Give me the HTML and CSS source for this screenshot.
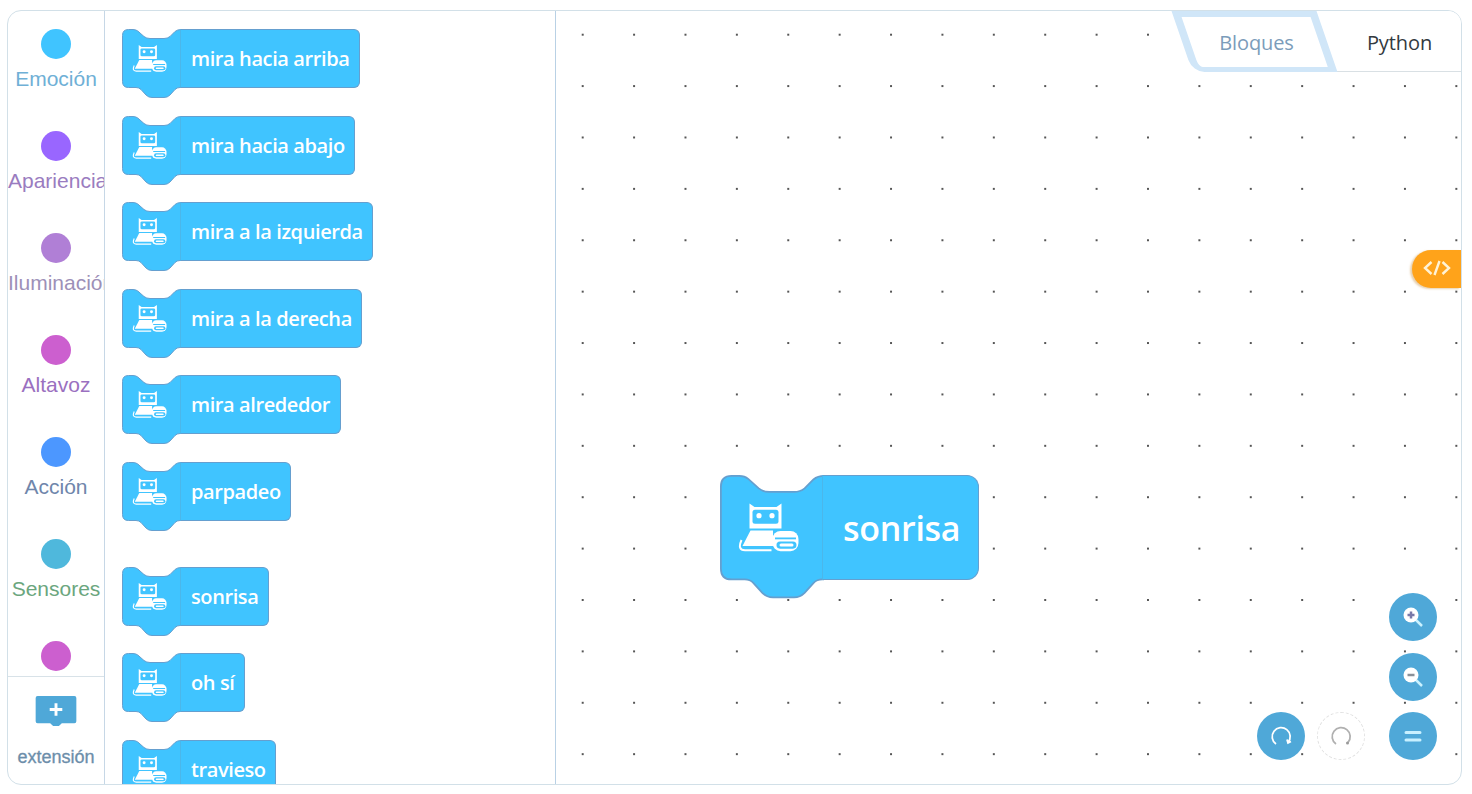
FILE: index.html
```html
<!DOCTYPE html>
<html lang="es">
<head>
  <meta charset="UTF-8" />
  <title>Bloques</title>
  <link rel="stylesheet" href="styles.css">
</head>
<body>

<svg class="defs" width="0" height="0">
  <symbol id="hat" viewBox="0 0 59 70" preserveAspectRatio="none">
    <path class="hat-shape" d="M.5 6.5Q.5.5 6.500.5H11Q14 .5 16 2.200L22 7.500Q24.500 9.500 28 9.500H42Q45.500 9.500 48 7.500L53 2.500Q55.500.5 59 .5V58.500H58Q55 58.500 53 60.500L48 66Q45.500 68.500 42 68.500H30Q26.500 68.500 24 66L19 60.500Q17 58.500 14 58.500H6.500Q.5 58.500.5 52.500Z"/>
    <g transform="translate(10.500 16) scale(.567)">
      <path class="robot-white" d="M11 0L16 3.500H38L43 0V24.500H11Z"/>
      <rect class="robot-blue" x="14" y="6" width="26" height="14" rx="2.500"/>
      <circle class="robot-white" cx="20.500" cy="12" r="2.600"/>
      <circle class="robot-white" cx="33.500" cy="12" r="2.600"/>
      <path class="robot-white" d="M12 26.500H34.500V42H4Z"/>
      <path class="robot-line" d="M3 36Q-1.500 46 6.500 46H33"/>
      <rect class="robot-white" x="34" y="27" width="26" height="20" rx="8"/>
      <rect class="robot-blue" x="36.500" y="33.500" width="21" height="1.800"/>
      <rect class="robot-blue" x="38" y="37.500" width="20" height="7" rx="3.500"/>
      <rect class="robot-white" x="41" y="39.500" width="14" height="3" rx="1.500"/>
    </g>
  </symbol>
  <symbol id="magnifier" viewBox="0 0 24 24">
    <path class="glass-handle" d="M15 15L21 21"/>
    <circle class="glass" cx="10" cy="10" r="7.500"/>
  </symbol>
</svg>

<div class="app">
  <aside class="sidebar">
    <ul class="categories">
      <li class="category"><span class="dot dot-emotion"></span><span class="cat-name name-emotion">Emoción</span></li>
      <li class="category"><span class="dot dot-looks"></span><span class="cat-name name-looks">Apariencia</span></li>
      <li class="category"><span class="dot dot-light"></span><span class="cat-name name-light">Iluminación</span></li>
      <li class="category"><span class="dot dot-speaker"></span><span class="cat-name name-speaker">Altavoz</span></li>
      <li class="category"><span class="dot dot-action"></span><span class="cat-name name-action">Acción</span></li>
      <li class="category"><span class="dot dot-sensor"></span><span class="cat-name name-sensor">Sensores</span></li>
      <li class="category"><span class="dot dot-speaker"></span></li>
    </ul>
    <div class="extension">
      <svg class="extension-icon" viewBox="0 0 42 32">
        <path class="extension-shape" d="M2 0H40Q42 0 42 2V26Q42 28 40 28H27L24 31H18L15 28H2Q0 28 0 26V2Q0 0 2 0Z"/>
        <path class="extension-plus" d="M21 7.500V20.500M14.500 14H27.500"/>
      </svg>
      <span class="extension-name">extensión</span>
    </div>
  </aside>

  <section class="palette">
    <div class="block"><svg class="hat"><use href="#hat"/></svg><span class="block-label">mira hacia arriba</span></div>
    <div class="block"><svg class="hat"><use href="#hat"/></svg><span class="block-label">mira hacia abajo</span></div>
    <div class="block"><svg class="hat"><use href="#hat"/></svg><span class="block-label">mira a la izquierda</span></div>
    <div class="block"><svg class="hat"><use href="#hat"/></svg><span class="block-label">mira a la derecha</span></div>
    <div class="block"><svg class="hat"><use href="#hat"/></svg><span class="block-label">mira alrededor</span></div>
    <div class="block"><svg class="hat"><use href="#hat"/></svg><span class="block-label">parpadeo</span></div>
    <div class="block block-group"><svg class="hat"><use href="#hat"/></svg><span class="block-label">sonrisa</span></div>
    <div class="block"><svg class="hat"><use href="#hat"/></svg><span class="block-label">oh sí</span></div>
    <div class="block"><svg class="hat"><use href="#hat"/></svg><span class="block-label">travieso</span></div>
  </section>

  <main class="workspace">
    <div class="tabs">
      <span class="tab tab-active">Bloques</span>
      <span class="tab tab-python">Python</span>
    </div>

    <button class="code-toggle">
      <svg viewBox="0 0 28 18" width="28" height="18"><path d="M8.500 3L2 9L8.500 15M19.500 3L26 9L19.500 15M16.500 2L11.500 16"/></svg>
    </button>

    <div class="block block-big"><svg class="hat"><use href="#hat"/></svg><span class="block-label">sonrisa</span></div>

    <div class="controls">
      <button class="ctl ctl-in">
        <svg viewBox="0 0 24 24" width="24" height="24"><use href="#magnifier"/><path class="sign-in" d="M10 6.500V13.500M6.500 10H13.500"/></svg>
      </button>
      <button class="ctl ctl-out">
        <svg viewBox="0 0 24 24" width="24" height="24"><use href="#magnifier"/><path class="sign-out" d="M6.500 10H13.500"/></svg>
      </button>
      <button class="ctl ctl-undo">
        <svg viewBox="0 0 24 24" width="24" height="24"><path class="arc" d="M7 20A9 9 0 1 1 19 18.500M18 15.500L19 19L22 17.500"/></svg>
      </button>
      <button class="ctl ctl-redo">
        <svg viewBox="0 0 24 24" width="24" height="24"><path class="arc" d="M7 20A9 9 0 1 1 19 18.500"/><circle class="arc-end" cx="18.500" cy="19" r="1.500"/></svg>
      </button>
      <button class="ctl ctl-fit">
        <svg viewBox="0 0 24 24" width="24" height="24"><path class="bars" d="M5 8.500H19M5 16H19"/></svg>
      </button>
    </div>
  </main>
</div>

</body>
</html>
```

FILE: styles.css
```css
* { box-sizing: border-box; }
html, body { height: 100%; }
body { margin: 0; background: #ffffff; overflow: hidden; font-family: 'Open Sans', 'Noto Sans', sans-serif; }
.defs { position: absolute; }

.app {
  display: flex;
  height: 775px;
  margin: 10px 10px 0 7px;
  border: 1px solid #d2e0e8;
  border-radius: 14px;
  overflow: hidden;
}

/* left column with the category dots */
.sidebar { width: 97px; flex: none; display: flex; flex-direction: column; border-right: 1px solid #c6d7e6; }
.categories { flex: 1; min-height: 0; margin: 0; padding: 18px 0 0; list-style: none; overflow: hidden; }
.category { height: 102px; display: flex; flex-direction: column; align-items: center; overflow: hidden; }
.dot { width: 30px; height: 30px; flex: none; border-radius: 50%; }
.cat-name { width: 100%; margin-top: 7px; font-family: 'Liberation Sans', Arial, sans-serif; font-size: 21px; line-height: 26px; text-align: center; white-space: nowrap; overflow: hidden; }
.dot-emotion { background: #40c4ff; }
.dot-looks { background: #9966ff; }
.dot-light { background: #b07fd6; }
.dot-speaker { background: #cc5fcf; }
.dot-action { background: #4c97ff; }
.dot-sensor { background: #4fb8dc; }
.name-emotion { color: #6fb0d6; }
.name-looks { color: #9a7cc0; }
.name-light { color: #9d90b8; }
.name-speaker { color: #9a70c0; }
.name-action { color: #6f86ab; }
.name-sensor { color: #6ba67e; }

.extension { height: 108px; flex: none; display: flex; flex-direction: column; align-items: center; border-top: 1px solid #d8e2e8; }
.extension-icon { width: 42px; height: 31px; margin-top: 19px; }
.extension-shape { fill: #4fa8d8; }
.extension-plus { fill: none; stroke: #ffffff; stroke-width: 3; }
.extension-name { margin-top: 20px; font-family: 'Liberation Sans', Arial, sans-serif; font-size: 18px; color: #6c8eaa; -webkit-text-stroke: .3px #6c8eaa; }

/* block list */
.palette { width: 451px; flex: none; display: flex; flex-direction: column; align-items: flex-start; gap: 16.500px; padding: 18px 0 0 17px; border-right: 1px solid #b9d1e5; overflow: hidden; }
.block { display: flex; flex: none; align-items: flex-start; height: 70px; }
.block-group { margin-top: 18.500px; }
.hat { width: 59px; height: 70px; flex: none; }
.hat-shape { fill: #40c4ff; stroke: #659fcf; stroke-width: 1; }
.robot-white { fill: #ffffff; }
.robot-blue { fill: #40c4ff; }
.robot-line { fill: none; stroke: #ffffff; stroke-width: 2; }
.block-label {
  height: 59px;
  display: flex;
  align-items: center;
  margin-left: -1px;
  padding: 0 9.500px 0 10px;
  background: #40c4ff;
  border: 1px solid #659fcf;
  border-left-color: #4bb7ea;
  border-radius: 0 6px 6px 0;
  color: #ffffff;
  font-size: 20px;
  letter-spacing: -.4px;
  font-weight: 600;
  white-space: nowrap;
}

/* canvas */
.workspace {
  position: relative;
  flex: 1;
  min-width: 0;
  background-image: radial-gradient(circle, #555555 .7px, transparent 1.300px);
  background-size: 51.400px 51.400px;
  background-position: 1px -2px;
}

.tabs { position: absolute; top: 0; right: 0; width: 289px; height: 61px; display: flex; }
.tab { height: 61px; display: flex; align-items: center; justify-content: center; padding-top: 2px; font-size: 20px; letter-spacing: -.1px; color: #333a40; }
.tab-python { flex: 1; padding-left: 1px; background: #ffffff; border-bottom: 1px solid #d9e0e4; }
.tab-active { position: relative; width: 165px; padding-left: 4px; color: #7b9cba; z-index: 0; }
.tab-active::before {
  content: "";
  position: absolute;
  inset: 0 10px 0 10px;
  z-index: -1;
  background: #ffffff;
  border: solid #d0e6f8;
  border-width: 6px 8px 5px 8px;
  border-radius: 0 0 0 12px;
  transform: skewX(19deg);
}

.code-toggle {
  position: absolute;
  top: 239px;
  right: 0;
  width: 49px;
  height: 38px;
  padding: 0;
  border: none;
  border-radius: 19px 0 0 19px;
  background: #ffa31a;
  box-shadow: -2px 1px 2px rgba(200, 150, 80, 0.45);
}
.code-toggle path { fill: none; stroke: #fff3d6; stroke-width: 2.400; }

.block-big { position: absolute; left: 164px; top: 464px; height: 125px; }
.block-big .hat { width: 104px; height: 125px; }
.block-big .block-label { height: 105px; margin-left: -2px; padding: 0 18px 0 20px; font-size: 34px; letter-spacing: -.3px; border-radius: 0 12px 12px 0; }

.controls { position: absolute; right: 24px; bottom: 24px; display: grid; grid-template-columns: 48px 48px 60px; column-gap: 12px; row-gap: 11.500px; justify-items: end; }
.ctl { width: 48px; height: 48px; padding: 0; border: none; border-radius: 50%; background: #4fa8d8; display: flex; align-items: center; justify-content: center; }
.ctl-in { grid-column: 3; grid-row: 1; }
.ctl-out { grid-column: 3; grid-row: 2; }
.ctl-undo { grid-column: 1; grid-row: 3; }
.ctl-redo { grid-column: 2; grid-row: 3; background: #ffffff; border: 1px dashed #e2e2e2; }
.ctl-fit { grid-column: 3; grid-row: 3; }
.glass { fill: #ffffff; }
.glass-handle { fill: none; stroke: #c9f1ff; stroke-width: 2.500; }
.sign-in { fill: none; stroke: #7878a8; stroke-width: 2.500; }
.sign-out { fill: none; stroke: #8a9098; stroke-width: 2.500; }
.arc { fill: none; stroke: #ffffff; stroke-width: 1.800; }
.ctl-redo .arc { stroke: #b0b0b0; }
.arc-end { fill: #9a9a9a; }
.bars { fill: none; stroke: #c8f0ff; stroke-width: 3; stroke-linecap: round; }
```
